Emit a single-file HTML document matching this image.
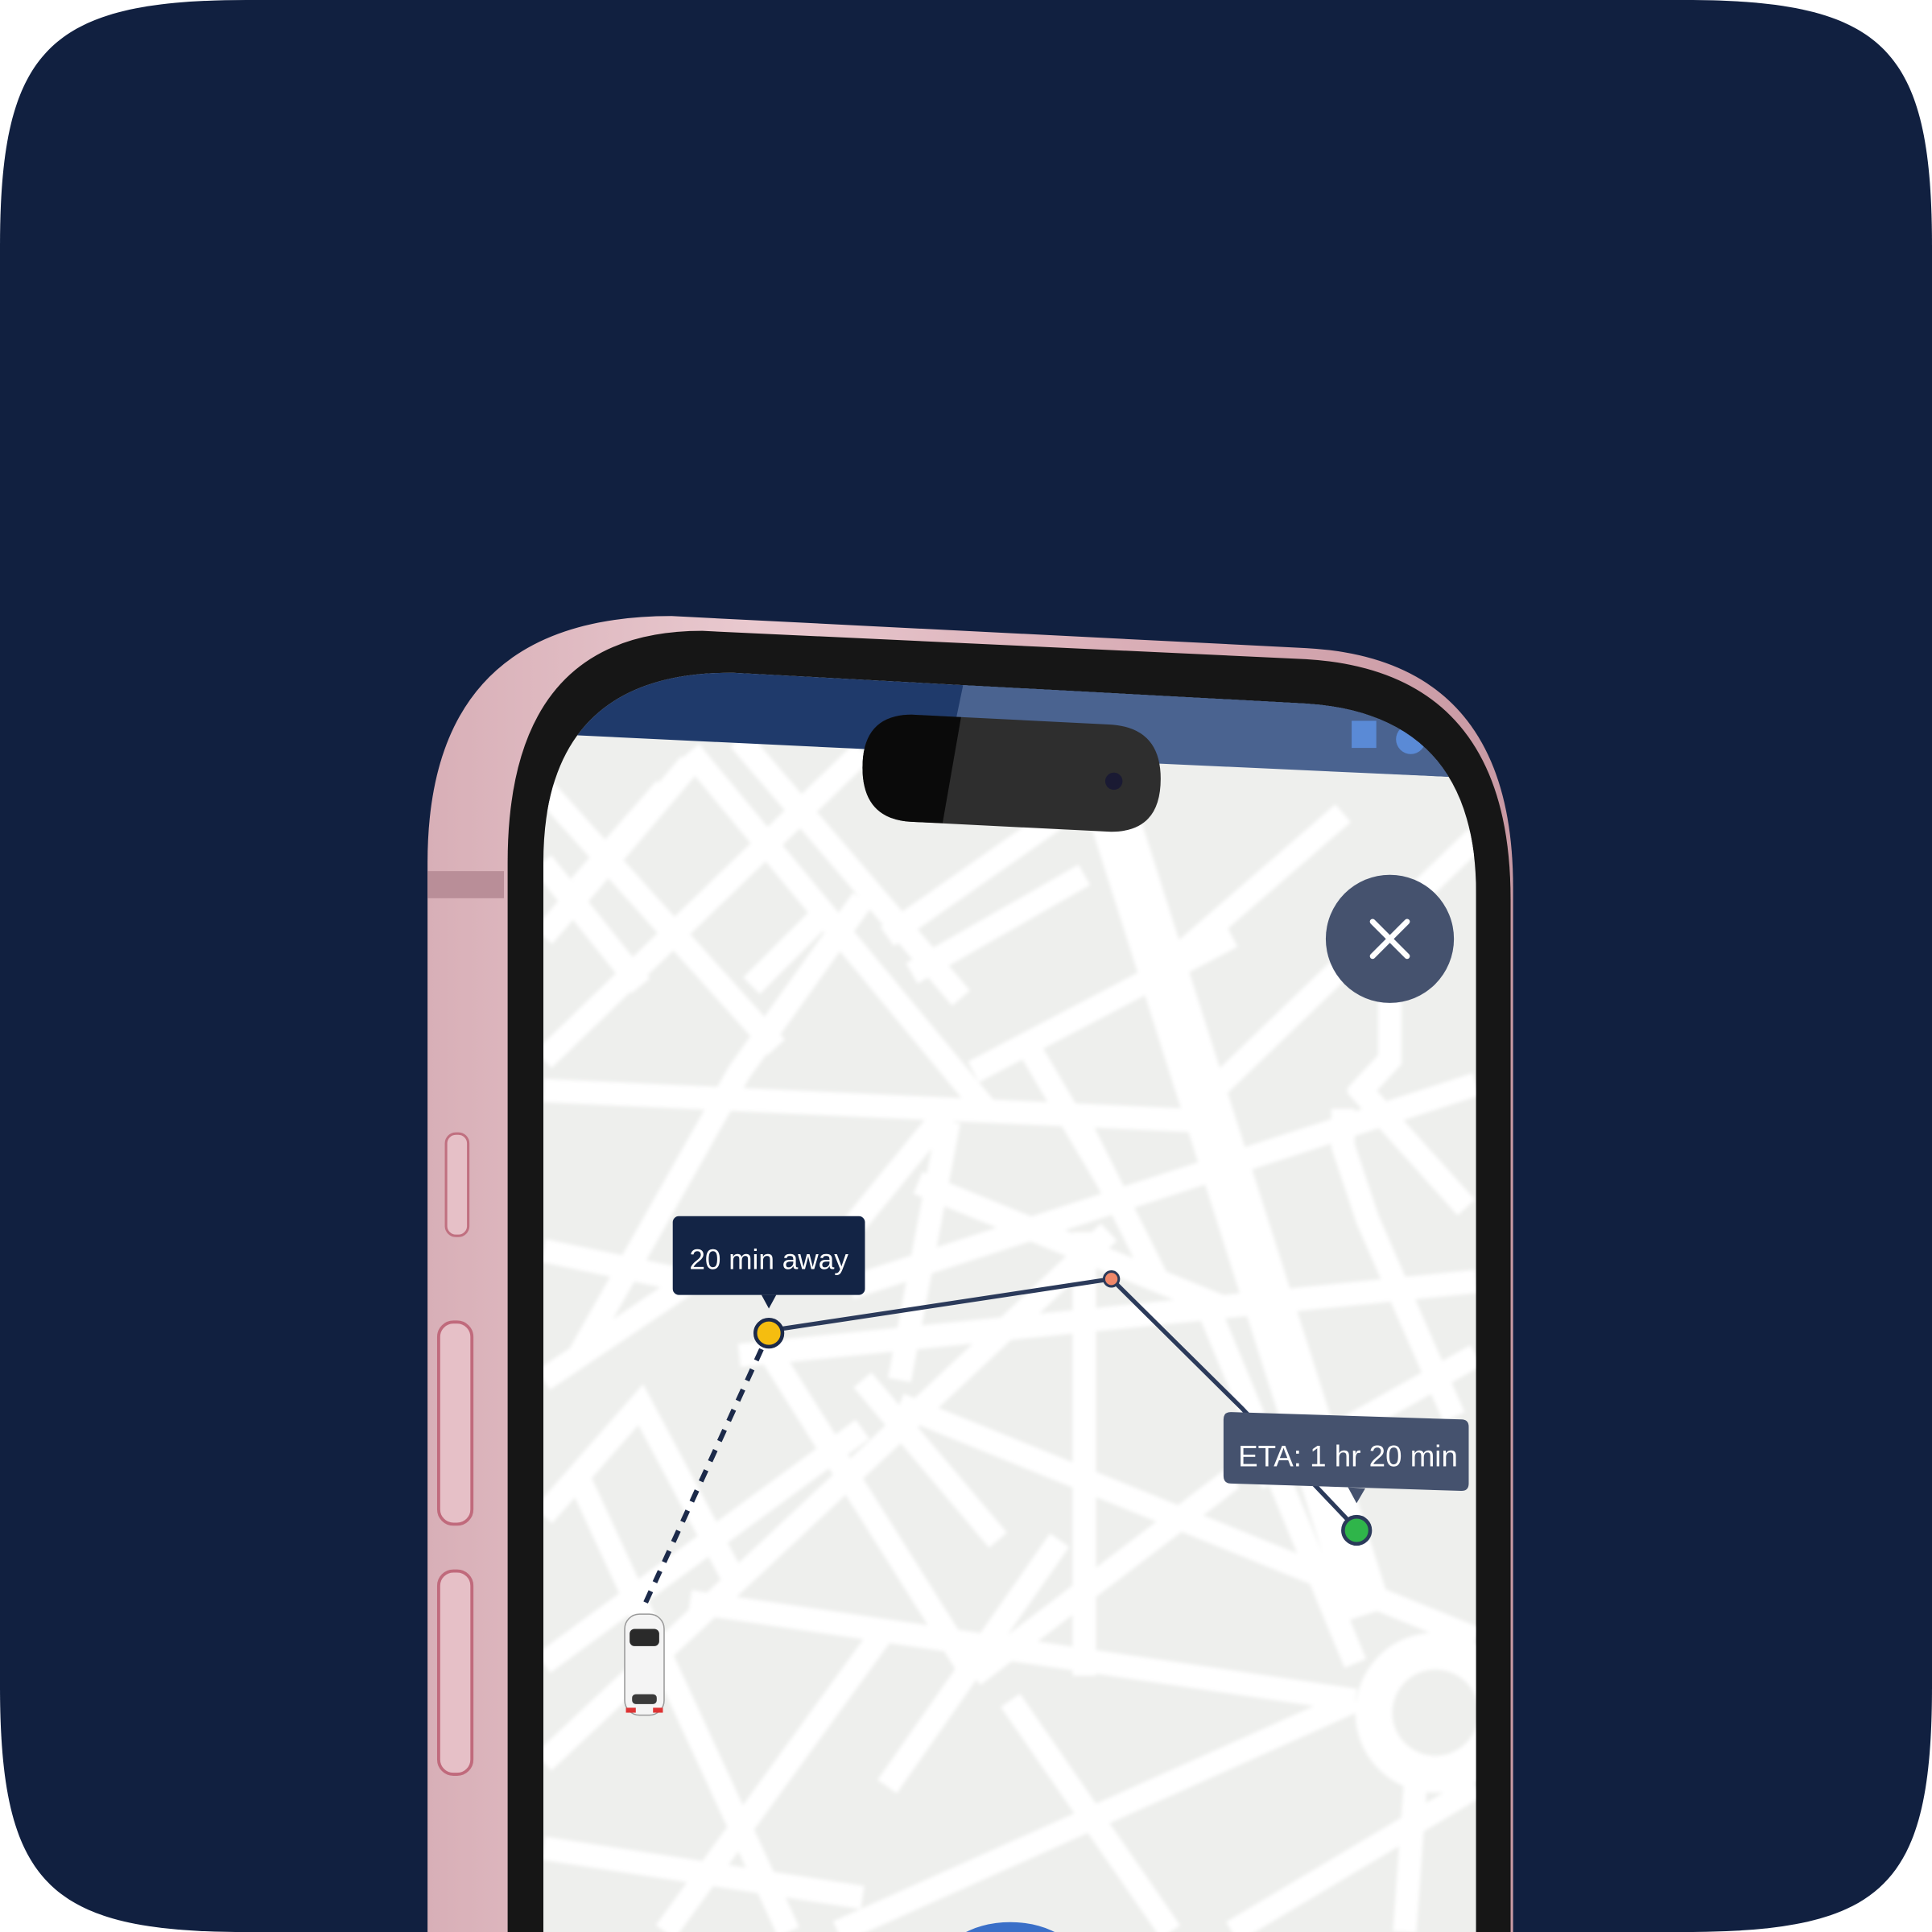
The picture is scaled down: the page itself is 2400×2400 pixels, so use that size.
<!DOCTYPE html>
<html><head><meta charset="utf-8"><style>
html,body{margin:0;padding:0;background:#fff;width:2400px;height:2400px;overflow:hidden}
svg{display:block}
</style></head><body>
<svg width="2400" height="2400" viewBox="0 0 1568 1568" xmlns="http://www.w3.org/2000/svg">
<defs>
<linearGradient id="pk" x1="0" x2="1" y1="0" y2="0">
<stop offset="0" stop-color="#d8afb7"/><stop offset="0.3" stop-color="#e9c9cf"/><stop offset="0.7" stop-color="#d7aab3"/><stop offset="1" stop-color="#c99aa4"/>
</linearGradient>
<filter id="bl"><feGaussianBlur stdDeviation="1.6"/></filter>
<clipPath id="scr"><path d="M441,1568 L441,700 Q441,545 595,546 L1060,571 Q1198,580 1198,725 L1198,1568 Z"/></clipPath>
</defs>
<path d="M200,0 L1368,0 C1530,0 1568,40 1568,200 L1568,1368 C1568,1530 1530,1568 1368,1568 L200,1568 C40,1568 0,1530 0,1368 L0,200 C0,40 40,0 200,0 Z" fill="#112040"/>
<!-- phone body -->
<path d="M347,1568 L347,700 Q347,500 545,500 L1060,526 Q1228,535 1228,720 L1228,1568 Z" fill="url(#pk)"/>
<rect x="347" y="707" width="62" height="22" fill="#b98e98"/>
<!-- bezel -->
<path d="M412,1568 L412,700 Q412,512 570,512 L1060,535 Q1226,545 1226,730 L1226,1568 Z" fill="#161616"/>
<!-- screen -->
<g clip-path="url(#scr)">
<rect x="430" y="530" width="780" height="1050" fill="#eeefed"/>
<g stroke="#ffffff" stroke-width="19" fill="none" stroke-linecap="butt" filter="url(#bl)">
<path d="M441,885 L980,910"/>
<path d="M441,1015 L560,1040"/>
<path d="M560,610 L800,900"/>
<path d="M441,640 L630,850"/>
<path d="M441,760 L560,620"/>
<path d="M441,860 L700,610"/>
<path d="M600,600 L780,810"/>
<path d="M440,700 L520,800"/>
<path d="M470,720 L540,640"/>
<path d="M610,800 L670,740"/>
<path d="M700,730 L600,870 L470,1100"/>
<path d="M740,790 L880,710"/>
<path d="M790,870 L1000,760"/>
<path d="M720,760 L870,655"/>
<path d="M680,1010 L770,900"/>
<path d="M770,910 L730,1120"/>
<path d="M835,850 L900,960"/>
<path d="M875,910 L940,1040"/>
<path d="M745,960 L990,1060"/>
<path d="M690,1045 L1198,880"/>
<path d="M600,1100 L1198,1040"/>
<path d="M441,1120 L560,1040"/>
<path d="M620,1090 L790,1360"/>
<path d="M441,1230 L520,1140 L600,1290"/>
<path d="M441,1350 L700,1160"/>
<path d="M441,1430 L900,1000"/>
<path d="M560,1300 L1100,1380"/>
<path d="M470,1200 L640,1568"/>
<path d="M540,1568 L720,1320"/>
<path d="M700,1120 L810,1250"/>
<path d="M730,1140 L1198,1330"/>
<path d="M880,1000 L880,1360"/>
<path d="M980,1060 L1100,1350"/>
<path d="M790,1360 L1000,1200"/>
<path d="M720,1450 L860,1250"/>
<path d="M820,1380 L950,1568"/>
<path d="M680,1568 L1100,1380"/>
<path d="M1000,1568 L1198,1450"/>
<path d="M1020,1200 L1198,1100"/>
<path d="M1100,880 L1190,980"/>
<path d="M1090,900 L1090,930 L1110,990 L1180,1150"/>
<path d="M1128,800 L1128,860 L1100,890"/>
<path d="M940,790 L1090,660"/>
<path d="M990,880 L1198,680"/>
<path d="M1150,1430 L1140,1568"/>
<path d="M441,1500 L700,1540"/>
<path d="M900,650 L1110,1310" stroke-width="40"/>
<circle cx="1165" cy="1390" r="50" stroke-width="30"/>
</g>
<!-- status bar -->
<path d="M430,530 L1210,560 L1210,632 L430,595 Z" fill="#1f3a6b"/>
<path d="M785,540 L1210,560 L1210,632 L770,612 Z" fill="#4a6390"/>
<rect x="1097" y="585" width="20" height="22" fill="#5a8ad6"/>
<circle cx="1145" cy="600" r="12" fill="#5a8ad6"/>
<ellipse cx="820" cy="1600" rx="60" ry="40" fill="#3a6fc8"/>
</g>
<!-- dynamic island -->
<path d="M740,580 L900,588 Q942,590 942,632 Q942,676 900,675 L740,667 Q700,665 700,623 Q700,580 740,580 Z" fill="#2e2e2e"/>
<path d="M740,580 L780,582 L765,668 L740,667 Q700,665 700,623 Q700,580 740,580 Z" fill="#0a0a0a"/>
<circle cx="904" cy="634" r="7" fill="#1a1a33"/>
<!-- close button -->
<circle cx="1128" cy="762" r="52" fill="#45526e"/>
<path d="M1114,748 L1142,776 M1142,748 L1114,776" stroke="#fff" stroke-width="4.5" stroke-linecap="round"/>
<!-- route -->
<path d="M618,1095 L522,1305" stroke="#1c2a4a" stroke-width="4" stroke-dasharray="10,8"/>
<path d="M624,1080 L902,1038 L1008,1143 L1100,1240" stroke="#2b3a5a" stroke-width="3.5" fill="none"/>
<circle cx="902" cy="1038" r="6" fill="#f0886a" stroke="#2b3a5a" stroke-width="2"/>
<circle cx="624" cy="1082" r="11" fill="#f5bd10" stroke="#1c2a4a" stroke-width="3"/>
<circle cx="1101" cy="1242" r="11" fill="#2fb54a" stroke="#2b3a5a" stroke-width="3"/>
<!-- tooltips -->
<rect x="546" y="987" width="156" height="64" rx="5" fill="#132445"/>
<path d="M618,1051 L624,1062 L630,1051 Z" fill="#132445"/>
<text x="624" y="1030" font-family="Liberation Sans, sans-serif" font-size="23" fill="#fff" text-anchor="middle">20 min away</text>
<path d="M999,1146 L1186,1152 Q1192,1152 1192,1158 L1192,1204 Q1192,1210 1186,1210 L999,1204 Q993,1204 993,1198 L993,1152 Q993,1146 999,1146 Z" fill="#45526e"/>
<path d="M1094,1207 L1101,1220 L1108,1208 Z" fill="#45526e"/>
<text x="1094" y="1190" font-family="Liberation Sans, sans-serif" font-size="24" fill="#fff" text-anchor="middle">ETA:  1 hr 20 min</text>
<!-- car -->
<rect x="507" y="1310" width="32" height="82" rx="12" fill="#f4f4f4" stroke="#999" stroke-width="1"/>
<rect x="511" y="1322" width="24" height="14" rx="4" fill="#2a2a2a"/>
<rect x="513" y="1375" width="20" height="8" rx="3" fill="#3a3a3a"/>
<rect x="508" y="1386" width="8" height="4" fill="#d33"/><rect x="530" y="1386" width="8" height="4" fill="#d33"/>
<!-- side buttons -->
<rect x="362" y="920" width="18" height="83" rx="8" fill="#e6c0c7" stroke="#c07080" stroke-width="2"/>
<rect x="356" y="1073" width="27" height="164" rx="12" fill="#e6c0c7" stroke="#c06a7c" stroke-width="2.5"/>
<rect x="356" y="1275" width="27" height="165" rx="12" fill="#e6c0c7" stroke="#c06a7c" stroke-width="2.5"/>
</svg>
</body></html>
